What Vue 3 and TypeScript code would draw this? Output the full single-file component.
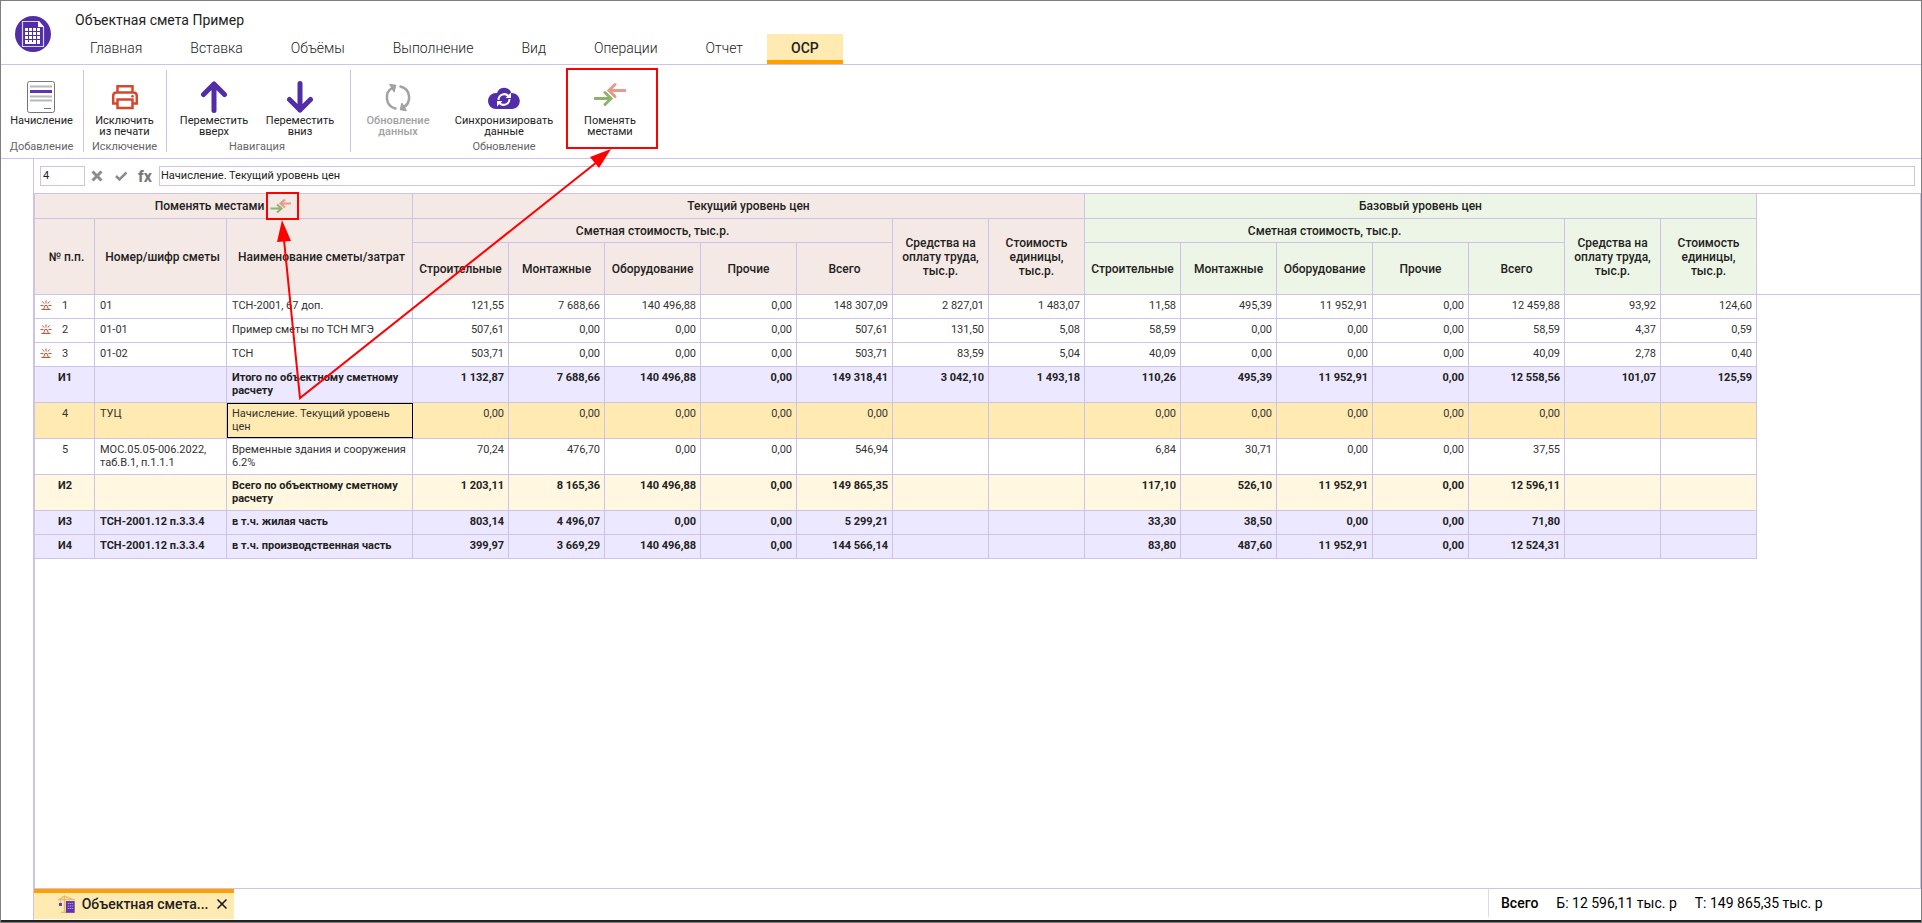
<script setup lang="ts">
import { ref } from 'vue'

interface Row {
  num: string
  code: string
  name: string
  kind?: 'total' | 'grand' | 'selected'
  marked?: boolean
  current: string[]
  base: string[]
}

const tabs = ['Главная', 'Вставка', 'Объёмы', 'Выполнение', 'Вид', 'Операции', 'Отчет', 'ОСР']
const activeTab = ref('ОСР')
const rowNumber = ref('4')
const formula = ref('Начисление. Текущий уровень цен')

const costColumns = ['Строительные', 'Монтажные', 'Оборудование', 'Прочие', 'Всего']

const rows: Row[] = [
  { num: '1', code: '01', name: 'ТСН-2001, 67 доп.', marked: true,
    current: ['121,55', '7 688,66', '140 496,88', '0,00', '148 307,09', '2 827,01', '1 483,07'],
    base: ['11,58', '495,39', '11 952,91', '0,00', '12 459,88', '93,92', '124,60'] },
  { num: '2', code: '01-01', name: 'Пример сметы по ТСН МГЭ', marked: true,
    current: ['507,61', '0,00', '0,00', '0,00', '507,61', '131,50', '5,08'],
    base: ['58,59', '0,00', '0,00', '0,00', '58,59', '4,37', '0,59'] },
  { num: '3', code: '01-02', name: 'ТСН', marked: true,
    current: ['503,71', '0,00', '0,00', '0,00', '503,71', '83,59', '5,04'],
    base: ['40,09', '0,00', '0,00', '0,00', '40,09', '2,78', '0,40'] },
  { num: 'И1', code: '', name: 'Итого по объектному сметному расчету', kind: 'total',
    current: ['1 132,87', '7 688,66', '140 496,88', '0,00', '149 318,41', '3 042,10', '1 493,18'],
    base: ['110,26', '495,39', '11 952,91', '0,00', '12 558,56', '101,07', '125,59'] },
  { num: '4', code: 'ТУЦ', name: 'Начисление. Текущий уровень цен', kind: 'selected',
    current: ['0,00', '0,00', '0,00', '0,00', '0,00', '', ''],
    base: ['0,00', '0,00', '0,00', '0,00', '0,00', '', ''] },
  { num: '5', code: 'МОС.05.05-006.2022, таб.В.1, п.1.1.1', name: 'Временные здания и сооружения 6.2%',
    current: ['70,24', '476,70', '0,00', '0,00', '546,94', '', ''],
    base: ['6,84', '30,71', '0,00', '0,00', '37,55', '', ''] },
  { num: 'И2', code: '', name: 'Всего по объектному сметному расчету', kind: 'grand',
    current: ['1 203,11', '8 165,36', '140 496,88', '0,00', '149 865,35', '', ''],
    base: ['117,10', '526,10', '11 952,91', '0,00', '12 596,11', '', ''] },
  { num: 'И3', code: 'ТСН-2001.12 п.3.3.4', name: 'в т.ч. жилая часть', kind: 'total',
    current: ['803,14', '4 496,07', '0,00', '0,00', '5 299,21', '', ''],
    base: ['33,30', '38,50', '0,00', '0,00', '71,80', '', ''] },
  { num: 'И4', code: 'ТСН-2001.12 п.3.3.4', name: 'в т.ч. производственная часть', kind: 'total',
    current: ['399,97', '3 669,29', '140 496,88', '0,00', '144 566,14', '', ''],
    base: ['83,80', '487,60', '11 952,91', '0,00', '12 524,31', '', ''] },
]
</script>

<template>
  <div class="app">
    <header class="header">
      <svg class="logo" width="36" height="36" viewBox="0 0 36 36" aria-hidden="true">
        <circle cx="18" cy="18" r="18" fill="#512da8" />
        <path d="M7.5 5.5H24L28.5 11V30.5H7.5Z" fill="#512da8" stroke="#d9d0ef" stroke-width="1.2" />
        <path d="M23 5L29 11H23Z" fill="#fff" />
        <g fill="#fff">
          <template v-for="y in 4" :key="y">
            <rect v-for="x in 4" :key="x" :x="6 + x * 4" :y="8 + y * 4" width="3" height="3" />
          </template>
          <rect x="10" y="26" width="11" height="2" />
          <rect x="22" y="26" width="3" height="2" />
        </g>
      </svg>
      <div class="heading">
        <div class="title">Объектная смета Пример</div>
        <nav class="tabs">
          <button v-for="t in tabs" :key="t" type="button" :class="['tab', { active: t === activeTab }]"
            @click="activeTab = t">{{ t }}</button>
        </nav>
      </div>
    </header>

    <section class="toolbar">
      <div class="group">
        <div class="tools">
          <button type="button" class="tool">
            <svg width="28" height="32" viewBox="0 0 28 32">
              <rect x=".5" y=".5" width="27" height="31" rx="2" fill="#fff" stroke="#777" />
              <path d="M3 5.5H25M3 15.5H25M3 19.5H25" stroke="#b5b9b9" stroke-width="2" />
              <path d="M3 10.5H25" stroke="#5e35b1" stroke-width="3" />
              <path d="M17 27.5H24" stroke="#777" />
            </svg>
            <span>Начисление</span>
          </button>
        </div>
        <div class="caption">Добавление</div>
      </div>
      <div class="group">
        <div class="tools">
          <button type="button" class="tool">
            <svg width="28" height="32" viewBox="0 0 28 32" fill="none" stroke="#d1492e" stroke-width="2.5">
              <path d="M6.5 11V5.2H21.500V11M6.5 22.500H2.200V15Q2.200 11.500 5.500 11.500H22.500Q25.800 11.500 25.800 15V22.500H21.500" />
              <rect x="6.5" y="18.5" width="15" height="8.5" fill="#fff" />
              <circle cx="21.5" cy="15.2" r="1.3" fill="#d1492e" stroke="none" />
            </svg>
            <span>Исключить<br>из печати</span>
          </button>
        </div>
        <div class="caption">Исключение</div>
      </div>
      <div class="group navigation">
        <div class="tools">
          <button type="button" class="tool">
            <svg width="28" height="32" viewBox="0 0 28 32" class="arrow">
              <path d="M14 29.5V3M3.500 13.500L14 3L24.500 13.500" />
            </svg>
            <span>Переместить<br>вверх</span>
          </button>
          <button type="button" class="tool">
            <svg width="28" height="32" viewBox="0 0 28 32" class="arrow">
              <path d="M14 2.5V29M3.500 18.500L14 29L24.500 18.500" />
            </svg>
            <span>Переместить<br>вниз</span>
          </button>
        </div>
        <div class="caption">Навигация</div>
      </div>
      <div class="group update">
        <div class="tools">
          <button type="button" class="tool" disabled>
            <svg width="28" height="32" viewBox="0 0 28 32" fill="none" stroke="#a2a2a2" stroke-width="2.5"
              stroke-linecap="round" stroke-linejoin="round">
              <path d="M11.5 27.5C1 25 0 11 9 6.5M16.500 5.500C27 8 28 22 19 26.500" />
              <path d="M6 3.5L11.500 4.500L10 10.500ZM22 29.500L16.500 28.500L18 22.500Z" fill="#a2a2a2" stroke-width="1.5" />
            </svg>
            <span>Обновление<br>данных</span>
          </button>
          <button type="button" class="tool">
            <svg width="32" height="32" viewBox="0 0 32 32">
              <path d="M8 28A8 8 0 0 1 8 12A2 2 0 0 1 9 12A7.5 7.5 0 0 1 23 11V12A8 8 0 0 1 24.500 28Z" fill="#512da8" />
              <g fill="none" stroke="#fff" stroke-width="2">
                <path d="M10.5 19A5.8 5.8 0 0 1 20.500 15M21.500 18A5.800 5.800 0 0 1 11.500 22" />
              </g>
              <path d="M23 11.5V17H17.500ZM9 25.500V20H14.500Z" fill="#fff" />
            </svg>
            <span>Синхронизировать<br>данные</span>
          </button>
          <button type="button" class="tool">
            <svg width="32" height="32" viewBox="0 0 32 32" class="swap">
              <path class="left" d="M31 9.5H15.500M21 3.500L15 9.500L21 15.500" />
              <path class="right" d="M1 17.5H16.500M11 11.500L17 17.500L11 23.500" />
            </svg>
            <span>Поменять<br>местами</span>
          </button>
        </div>
        <div class="caption">Обновление</div>
      </div>
    </section>

    <main class="workspace">
      <div class="formula-bar">
        <input v-model="rowNumber" class="cell-number" aria-label="Номер строки">
        <button type="button" class="mini" aria-label="Отменить">
          <svg width="12" height="12" viewBox="0 0 12 12"><path d="M1.500 1.500L10.500 10.500M10.500 1.500L1.500 10.500" fill="none" stroke="#8c8c8c" stroke-width="3" /></svg>
        </button>
        <button type="button" class="mini" aria-label="Принять">
          <svg width="12" height="12" viewBox="0 0 12 12"><path d="M1 6L4.500 9.500L11.500 2.500" fill="none" stroke="#8c8c8c" stroke-width="2.5" /></svg>
        </button>
        <span class="fx">fx</span>
        <input v-model="formula" class="formula" aria-label="Значение ячейки">
      </div>

      <div class="sheet">
        <table>
          <colgroup>
            <col class="c-num"><col class="c-code"><col class="c-name">
            <col v-for="n in 14" :key="n" class="c-value">
            <col>
          </colgroup>
          <thead>
            <tr class="h1">
              <th colspan="3">
                <span class="swap-head">Поменять местами
                  <svg width="22" height="16" viewBox="0 0 22 16" class="swap">
                    <path class="left" d="M21 5.5H11M15 1.500L10.500 5.500L15 9.500" />
                    <path class="right" d="M.5 10.5H11M7 6.500L11.500 10.500L7 14.500" />
                  </svg>
                </span>
              </th>
              <th colspan="7">Текущий уровень цен</th>
              <th colspan="7" class="green">Базовый уровень цен</th>
              <td rowspan="3" class="filler"></td>
            </tr>
            <tr class="h2">
              <th rowspan="2" class="lead">№ п.п.</th>
              <th rowspan="2" class="lead">Номер/шифр сметы</th>
              <th rowspan="2" class="lead">Наименование сметы/затрат</th>
              <template v-for="g in ['', 'green']" :key="g">
                <th colspan="5" :class="g">Сметная стоимость, тыс.р.</th>
                <th rowspan="2" :class="g">Средства на оплату труда, тыс.р.</th>
                <th rowspan="2" :class="g">Стоимость единицы, тыс.р.</th>
              </template>
            </tr>
            <tr class="h3">
              <template v-for="g in ['', 'green']" :key="g">
                <th v-for="c in costColumns" :key="c" :class="g">{{ c }}</th>
              </template>
            </tr>
          </thead>
          <tbody>
            <tr v-for="r in rows" :key="r.num" :class="r.kind">
              <td>
                <div class="num">
                  <svg v-if="r.marked" width="12" height="12" viewBox="0 0 12 12" fill="none" stroke="#d1492e">
                    <path d="M3.5 10.5L5 6.500H7L8.500 10.500M6 4.500V1.500M4 4.500L2.500 2.500M8 4.500L9.500 2.500M.5 6.500H3.500M8.500 6.500H11.500M1.500 10.500H10.500" />
                  </svg>
                  <span>{{ r.num }}</span>
                </div>
              </td>
              <td>{{ r.code }}</td>
              <td class="name">{{ r.name }}</td>
              <td v-for="(v, i) in [...r.current, ...r.base]" :key="i" class="value">{{ v }}</td>
              <td class="blank"></td>
            </tr>
          </tbody>
        </table>
      </div>

      <footer class="footer">
        <div class="doc-tab">
          <svg width="18" height="18" viewBox="0 0 18 18">
            <path d="M0 4.5H17.500M6.500 17V1L1 4.500M6.500 1L15 4.500M3 17.500H9" fill="none" stroke="#e8b96c" stroke-width="1.3" />
            <path d="M2.5 5V8" stroke="#e8b96c" />
            <rect x="1" y="8" width="3" height="3" fill="#5e35b1" />
            <rect x="8" y="6" width="9" height="12" fill="#5e35b1" />
            <path d="M10 8.500H15.500M10 11H15.500M10 13.500H15.500" stroke="#d9c5c4" stroke-dasharray="1 1" />
          </svg>
          <span>Объектная смета...</span>
          <button type="button" class="mini" aria-label="Закрыть">
            <svg width="12" height="12" viewBox="0 0 12 12"><path d="M1.500 1.500L10.500 10.500M10.500 1.500L1.500 10.500" stroke="#111" stroke-width="1.5" /></svg>
          </button>
        </div>
        <div class="summary">
          <b>Всего</b>
          <span>Б: 12 596,11 тыс. р</span>
          <span>Т: 149 865,35 тыс. р</span>
        </div>
      </footer>
    </main>

    <div class="strip"></div>

    <svg class="callouts" width="700" height="420" viewBox="0 0 700 420" aria-hidden="true">
      <g fill="none" stroke="#f00" stroke-width="2">
        <rect x="567" y="69" width="90" height="79" />
        <rect x="267" y="193" width="31" height="26" />
        <path d="M284 240L300 398L597 162" />
      </g>
      <path d="M282 220L291 241L277 242ZM611 149L599 168L590 157Z" fill="#f00" />
    </svg>
  </div>
</template>

<style>
body {
  margin: 0;
}
</style>

<style scoped>
.app {
  --line: #cdc2e8;
  position: relative;
  box-sizing: border-box;
  display: flex;
  flex-direction: column;
  min-height: 100vh;
  border: 1px solid #7f7f7f;
  background: #fff;
  color: #222;
  font: 11px/13px Roboto, "Liberation Sans", sans-serif;
}
button {
  padding: 0;
  border: 0;
  background: none;
  color: inherit;
  font: inherit;
}
.header {
  display: flex;
  height: 63px;
  border-bottom: 1px solid var(--line);
}
.logo {
  margin: 15px 12px 0 14px;
}
.heading {
  display: flex;
  flex-direction: column;
  justify-content: space-between;
}
.title {
  padding: 9px 0 0 12px;
  font-size: 14px;
  line-height: 20px;
}
.tabs {
  display: flex;
  padding-left: 3px;
}
.tab {
  height: 30px;
  padding: 2px 24px 0;
  border-bottom: 4px solid transparent;
  font-size: 14px;
  font-weight: 300;
}
.tab.active {
  border-color: #ffa000;
  background: #ffebb2;
  font-weight: 500;
}
.toolbar {
  display: flex;
  padding: 5px 0 6px;
  border-bottom: 1px solid var(--line);
}
.group {
  box-sizing: border-box;
  display: flex;
  flex-direction: column;
  justify-content: space-between;
  min-width: 83px;
  height: 82px;
  padding-right: 1px;
  border-right: 1px solid var(--line);
}
.navigation {
  padding: 0 7px 0 4px;
}
.update {
  border-right: 0;
}
.tools {
  display: flex;
  justify-content: center;
}
.tool {
  display: flex;
  flex-direction: column;
  align-items: center;
  gap: 2px;
  padding-top: 11px;
  line-height: 11px;
  white-space: nowrap;
}
.navigation .tool {
  width: 86px;
}
.update .tools {
  gap: 12px;
}
.update .tool {
  width: 94px;
}
.tool:disabled {
  color: #a2a2a2;
  font-weight: 500;
}
.caption {
  color: #666;
  line-height: 11px;
  text-align: center;
}
.arrow {
  fill: none;
  stroke: #512da8;
  stroke-width: 5;
  stroke-linecap: round;
  stroke-linejoin: round;
}
.swap {
  fill: none;
  stroke-width: 2;
}
.tool .swap {
  stroke-width: 3;
  stroke-linecap: round;
}
.swap .left {
  stroke: #e79a88;
}
.swap .right {
  stroke: #8db46f;
}
.workspace {
  display: flex;
  flex: 1;
  flex-direction: column;
  margin-left: 32px;
  border-left: 1px solid var(--line);
}
.formula-bar {
  display: flex;
  align-items: center;
  height: 34px;
  padding: 0 6px;
}
.formula-bar input {
  box-sizing: border-box;
  height: 20px;
  padding: 0 2px 2px;
  border: 1px solid var(--line);
  background: #fff;
  color: #222;
  font: inherit;
}
.cell-number {
  width: 45px;
}
.formula-bar .formula {
  flex: 1;
  min-width: 0;
  padding-left: 1px;
}
.mini {
  display: grid;
  place-items: center;
  width: 24px;
  height: 20px;
}
.fx {
  box-sizing: border-box;
  width: 26px;
  padding-right: 2px;
  color: #777;
  font-size: 16px;
  font-weight: 700;
  text-align: center;
}
.sheet {
  flex: 1;
  border: 1px solid var(--line);
}
table {
  width: 100%;
  table-layout: fixed;
  border-collapse: separate;
  border-spacing: 0;
}
tbody tr {
  height: 24px;
}
.c-num {
  width: 60px;
}
.c-code {
  width: 132px;
}
.c-name {
  width: 186px;
}
.c-value {
  width: 96px;
}
th,
td {
  box-sizing: border-box;
  padding: 4px 4px 5px 5px;
  border: solid var(--line);
  border-width: 0 1px 1px 0;
  text-align: left;
  vertical-align: top;
}
td {
  color: #333;
}
th {
  padding: 0 2px;
  background: #f5e9e5;
  font-size: 12px;
  font-weight: 500;
  line-height: 14px;
  text-align: center;
  vertical-align: middle;
}
.lead {
  padding: 0 0 0 4px;
}
.green {
  background: #edf5e6;
}
.h1 {
  height: 25px;
}
.h2 {
  height: 24px;
}
.h3 {
  height: 52px;
}
.filler {
  border-right: 0;
}
.swap-head {
  display: flex;
  align-items: center;
  justify-content: center;
  gap: 6px;
}
.value {
  text-align: right;
}
.blank {
  border: 0;
}
.num {
  display: grid;
  grid-template-columns: 1fr auto 1fr;
}
.num span {
  grid-column: 2;
}
.total td,
.grand td {
  color: #222;
  font-weight: 700;
}
.total td:not(.blank) {
  background: #ece8ff;
}
.grand td:not(.blank) {
  background: #fff7df;
}
.selected td:not(.blank) {
  background: #ffebb2;
}
.selected .name {
  border-right-color: #000;
  box-shadow: inset 1px 1px 0 #000, inset 0 -1px 0 #000;
}
.footer {
  display: flex;
  justify-content: space-between;
  height: 31px;
}
.doc-tab {
  box-sizing: border-box;
  display: flex;
  align-items: center;
  width: 200px;
  height: 30px;
  padding: 0 0 4px 24px;
  border-top: 4px solid #ffa000;
  background: #ffebb2;
  font-size: 14px;
  font-weight: 500;
  white-space: nowrap;
}
.doc-tab span {
  margin: 0 2px 0 6px;
}
.summary {
  box-sizing: border-box;
  display: flex;
  align-items: center;
  gap: 18px;
  width: 433px;
  height: 28px;
  padding-left: 12px;
  border-left: 1px solid #ddd;
  color: #000;
  font-size: 14px;
}
.summary b {
  font-weight: 500;
}
.strip {
  height: 2px;
  background: #222;
}
.callouts {
  position: absolute;
  top: -1px;
  left: -1px;
  pointer-events: none;
}
</style>
